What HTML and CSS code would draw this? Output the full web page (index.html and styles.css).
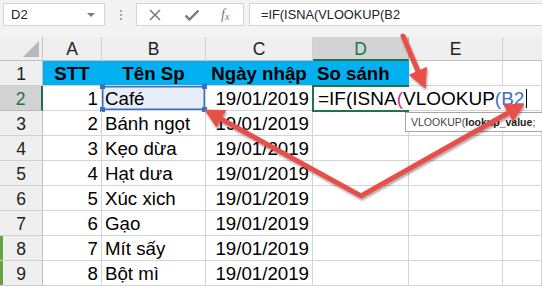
FILE: index.html
```html
<!DOCTYPE html>
<html lang="vi">
<head>
  <meta charset="UTF-8" />
  <title>VLOOKUP</title>
  <link rel="stylesheet" href="styles.css">
</head>
<body>
  <div class="toolbar">
    <div class="namebox">D2<span class="caret"></span></div>
    <div class="dots"><span></span><span></span><span></span></div>
    <div class="fbtns">
      <svg width="14" height="14" viewBox="0 0 14 14"><path d="M2 2 L12 12 M12 2 L2 12" stroke="#7a7a7a" stroke-width="1.6" fill="none"/></svg>
      <svg width="16" height="14" viewBox="0 0 16 14"><path d="M1.5 7.5 L5.5 11.5 L14.5 2.5" stroke="#7a7a7a" stroke-width="2.4" fill="none"/></svg>
      <span class="fx">f<sub>x</sub></span>
    </div>
    <div class="finput">=IF(ISNA(VLOOKUP(B2</div>
  </div>

  <div class="sheet">
    <div class="hd corner"><span class="tri"></span></div>
    <div class="hd">A</div>
    <div class="hd">B</div>
    <div class="hd">C</div>
    <div class="hd hd-on">D</div>
    <div class="hd">E</div>
    <div class="hd last"></div>

    <div class="rh">1</div>
    <div class="c blue ctr">STT</div>
    <div class="c blue ctr">Tên Sp</div>
    <div class="c blue ctr">Ngày nhập</div>
    <div class="c blue left">So sánh</div>
    <div class="c"></div>
    <div class="c"></div>

    <div class="rh rh-on">2</div>
    <div class="c num">1</div>
    <div class="c ref">Café<i class="h tl"></i><i class="h tr"></i><i class="h bl"></i><i class="h br"></i></div>
    <div class="c num">19/01/2019</div>
    <div class="c active"><span class="edit">=IF(ISNA<span class="p1">(</span>VLOOKUP<span class="p2">(B2</span><span class="cursor"></span></span></div>
    <div class="c"></div>
    <div class="c"></div>

    <div class="rh">3</div>
    <div class="c num">2</div>
    <div class="c">Bánh ngọt</div>
    <div class="c num">19/01/2019</div>
    <div class="c"></div><div class="c"></div><div class="c"></div>

    <div class="rh">4</div>
    <div class="c num">3</div>
    <div class="c">Kẹo dừa</div>
    <div class="c num">19/01/2019</div>
    <div class="c"></div><div class="c"></div><div class="c"></div>

    <div class="rh">5</div>
    <div class="c num">4</div>
    <div class="c">Hạt dưa</div>
    <div class="c num">19/01/2019</div>
    <div class="c"></div><div class="c"></div><div class="c"></div>

    <div class="rh">6</div>
    <div class="c num">5</div>
    <div class="c">Xúc xich</div>
    <div class="c num">19/01/2019</div>
    <div class="c"></div><div class="c"></div><div class="c"></div>

    <div class="rh">7</div>
    <div class="c num">6</div>
    <div class="c">Gạo</div>
    <div class="c num">19/01/2019</div>
    <div class="c"></div><div class="c"></div><div class="c"></div>

    <div class="rh mark">8</div>
    <div class="c num">7</div>
    <div class="c">Mít sấy</div>
    <div class="c num">19/01/2019</div>
    <div class="c"></div><div class="c"></div><div class="c"></div>

    <div class="rh mark">9</div>
    <div class="c num">8</div>
    <div class="c">Bột mì</div>
    <div class="c num">19/01/2019</div>
    <div class="c"></div><div class="c"></div><div class="c"></div>
  </div>

  <div class="tip">VLOOKUP(<b>lookup_value</b>;</div>

  <svg class="arrows" width="542" height="286" viewBox="0 0 542 286">
    <defs>
      <filter id="sh" x="-10%" y="-10%" width="120%" height="120%">
        <feDropShadow dx="1" dy="2" stdDeviation="1.2" flood-color="#000" flood-opacity="0.35"/>
      </filter>
    </defs>
    <g filter="url(#sh)" fill="#e8504a" stroke="#e8504a">
      <line x1="403" y1="36" x2="418" y2="71" stroke-width="5" stroke-linecap="round"/>
      <polygon points="425,88 426.5,67.5 409.5,75" stroke-width="1"/>
      <polyline points="221,119 361,196 508,113" fill="none" stroke-width="5" stroke-linejoin="miter"/>
      <polygon points="205,110 225.5,110.5 216.5,127" stroke-width="1"/>
      <polygon points="524,104 513,121 504,105" stroke-width="1"/>
    </g>
  </svg>
</body>
</html>
```

FILE: styles.css
```css
body {
  margin: 0;
  width: 542px;
  height: 286px;
  overflow: hidden;
  position: relative;
  font-family: "Liberation Sans", Arial, sans-serif;
  background-color: #ffffff;
}

/* formula bar */

.toolbar {
  height: 37px;
  box-sizing: border-box;
  padding: 3px 0 0 3px;
  display: flex;
  align-items: flex-start;
  background-color: #f3f3f3;
}

.namebox {
  width: 102px;
  height: 23px;
  box-sizing: border-box;
  border: 1px solid #d5d5d5;
  background-color: #fff;
  font-size: 13px;
  line-height: 21px;
  padding-left: 7px;
  color: #222;
  position: relative;
}

.caret {
  position: absolute;
  right: 9px;
  top: 9px;
  border-left: 4px solid transparent;
  border-right: 4px solid transparent;
  border-top: 4px solid #7a7a7a;
}

.dots {
  width: 31px;
  height: 23px;
  display: flex;
  flex-direction: column;
  align-items: center;
  justify-content: center;
  gap: 2px;
}

.dots span {
  width: 2px;
  height: 2px;
  background-color: #a8a8a8;
}

.fbtns {
  width: 108px;
  height: 23px;
  box-sizing: border-box;
  border: 1px solid #d5d5d5;
  background-color: #fff;
  display: flex;
  align-items: center;
  padding-left: 11px;
  gap: 22px;
}

.fx {
  font-family: "Liberation Serif", serif;
  font-style: italic;
  font-size: 14px;
  color: #7a7a7a;
  margin-left: -1px;
}

.fx sub {
  font-size: 10px;
  vertical-align: -1px;
}

.finput {
  margin-left: 5px;
  flex: 1;
  height: 23px;
  box-sizing: border-box;
  border: 1px solid #d5d5d5;
  border-right: none;
  background-color: #fff;
  font-size: 12.8px;
  line-height: 21px;
  padding-left: 11px;
  color: #222;
}

/* sheet grid */

.sheet {
  display: grid;
  grid-template-columns: 43px 59px 104px 107px 96px 94px 39px;
  grid-template-rows: 24px;
  grid-auto-rows: 25px;
}

.hd {
  background-color: #efefef;
  border-right: 1px solid #d0d0d0;
  border-bottom: 1px solid #c0c0c0;
  box-sizing: border-box;
  font-size: 17.5px;
  line-height: 24px;
  text-align: center;
  color: #222;
}

.hd.last {
  border-right: none;
}

.hd-on {
  background-color: #d3d3d3;
  color: #217346;
  border-bottom: 2px solid #217346;
  border-right-color: #b8b8b8;
}

.corner {
  position: relative;
  border-right-color: #c0c0c0;
}

.tri {
  position: absolute;
  right: 3px;
  bottom: 3px;
  border-left: 16px solid transparent;
  border-bottom: 16px solid #b8b8b8;
}

.rh {
  background-color: #efefef;
  border-right: 1px solid #c0c0c0;
  border-bottom: 1px solid #d0d0d0;
  box-sizing: border-box;
  font-size: 17.5px;
  line-height: 26px;
  text-align: center;
  color: #222;
}

.rh-on {
  background-color: #d3d3d3;
  color: #217346;
  border-right: 2px solid #217346;
  border-bottom-color: #b8b8b8;
}

.mark {
  box-shadow: inset 3px 0 0 #62a542;
}

.c {
  border-right: 1px solid #d4d4d4;
  border-bottom: 1px solid #d4d4d4;
  box-sizing: border-box;
  font-size: 18.7px;
  line-height: 26px;
  padding: 0 3px;
  white-space: nowrap;
  color: #000;
  position: relative;
}

.num {
  text-align: right;
}

.ctr {
  text-align: center;
}

.blue {
  background-color: #00b0f0;
  border-right-color: #00b0f0;
  font-weight: bold;
  padding: 0 1px;
  overflow: hidden;
}

.blue.left {
  padding-left: 4px;
}

/* B2 reference highlight */

.ref {
  background-color: #e8eef8;
  box-shadow: inset 0 0 0 1.5px #3b6fc3;
}

.h {
  position: absolute;
  width: 5px;
  height: 5px;
  background-color: #3b6fc3;
}

.tl { left: -2px; top: -2px; }
.tr { right: -2px; top: -2px; }
.bl { left: -2px; bottom: -2px; }
.br { right: -2px; bottom: -2px; }

/* D2 in edit mode: text runs over E2, border stays on D2 */

.active {
  z-index: 2;
  overflow: visible;
}

.active::after {
  content: "";
  position: absolute;
  z-index: 0;
  left: -1px;
  top: -1px;
  width: 97px;
  height: 27px;
  box-sizing: border-box;
  border: 2px solid #217346;
}

.edit {
  position: absolute;
  z-index: 1;
  left: 1px;
  top: 1px;
  height: 23px;
  background-color: #fff;
  padding: 0 4px 0 4px;
  display: flex;
  align-items: center;
  font-size: 19px;
}

.p1 {
  color: #c0399f;
}

.p2 {
  color: #3b6fc3;
}

.cursor {
  width: 1px;
  height: 19px;
  background-color: #000;
  margin-left: 2px;
}

.tip {
  position: absolute;
  left: 405px;
  top: 112px;
  width: 137px;
  height: 20px;
  box-sizing: border-box;
  border: 1px solid #a6a6a6;
  border-right: none;
  background-color: #fff;
  font-size: 10.5px;
  line-height: 18px;
  padding: 0 0 0 5px;
  color: #444;
  white-space: nowrap;
  overflow: hidden;
  z-index: 3;
}

.tip b {
  color: #222;
}

.arrows {
  position: absolute;
  left: 0;
  top: 0;
  z-index: 5;
  pointer-events: none;
}
```
